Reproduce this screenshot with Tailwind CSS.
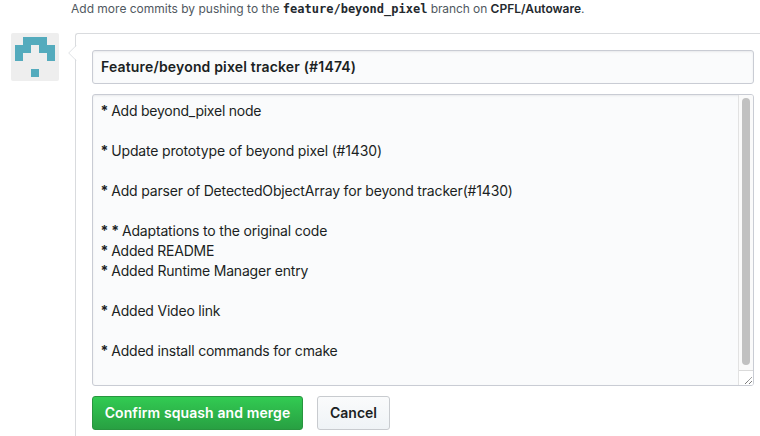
<!DOCTYPE html>
<html lang="en">
<head>
<meta charset="utf-8">
<title>Squash and merge</title>
<script src="https://cdn.jsdelivr.net/npm/@tailwindcss/browser@4"></script>
</head>
<body class="w-[760px] h-[436px] overflow-hidden bg-white font-[Inter,'Liberation_Sans',sans-serif] text-[#1b1f23]">
<p class="h-[33px] pl-[71px] text-[12px] leading-[18px] text-[#505860] whitespace-pre"><span>Add more commits by pushing to the </span><code class="font-['DejaVu_Sans_Mono',monospace] font-bold text-[12px] text-[#24292e]">feature/beyond_pixel</code><span class="tracking-[-0.08px]"> branch on </span><span class="font-semibold text-[#24292e]">CPFL/Autoware</span>.</p>
<main class="flex h-[403px] pl-[11px]">
  <svg class="size-12 shrink-0" viewBox="0 0 48 48" aria-label="avatar"><rect width="48" height="48" rx="2" fill="#eeeeee"/><path d="M12 4h24v8h8v16h-8v-8h-8v-8h-8v8h-8v8H4V12h8zM20 36h8v8h-8z" fill="#54abbd"/></svg>
  <section class="relative ml-4 w-[700px] shrink-0 rounded-tl-[3px] border-t border-l border-[#d9dbde] pt-4 pl-4">
    <svg class="absolute -left-2 top-[11px] w-[9px] h-4" viewBox="0 0 9 16"><path d="M9 0.5L1 8l8 7.5z" fill="#fff"/><path d="M8.2 0.5L0.7 8l7.5 7.5" fill="none" stroke="#dfe2e5"/></svg>
    <div class="flex h-[34px] w-[662px] items-center rounded-[3px] border border-[#c9ccd4] bg-[#fafbfc] pb-px pl-2 text-[14px] font-semibold tracking-[0.17px] shadow-[inset_0_1px_2px_rgba(27,31,35,0.075)]">Feature/beyond pixel tracker (#1474)</div>
    <div class="mt-[10px] flex h-[292px] w-[662px] overflow-hidden rounded-[3px] border border-[#c9ccd4] bg-[#fafbfc] shadow-[inset_0_1px_2px_rgba(27,31,35,0.075)]">
      <div class="grow whitespace-pre pt-[6px] pl-[7.5px] text-[14px] leading-5 tracking-[-0.2px]"><div class="tracking-[-0.24px]"><b class="tracking-[-0.9px]">*</b> Add beyond_pixel node</div><div class="mt-5 tracking-[-0.16px]"><b class="tracking-[-0.9px]">*</b> Update prototype of beyond pixel (#1430)</div><div class="mt-5 tracking-[-0.17px]"><b class="tracking-[-0.9px]">*</b> Add parser of DetectedObjectArray for beyond tracker(#1430)</div><div class="mt-5 tracking-[-0.17px]"><b class="tracking-[-0.9px]">*</b> <b class="tracking-[-0.9px]">*</b> Adaptations to the original code</div><div class="tracking-[-0.22px]"><b class="tracking-[-0.9px]">*</b> Added README</div><div class="tracking-[-0.2px]"><b class="tracking-[-0.9px]">*</b> Added Runtime Manager entry</div><div class="mt-5"><b class="tracking-[-0.9px]">*</b> Added Video link</div><div class="mt-5"><b class="tracking-[-0.9px]">*</b> Added install commands for cmake</div></div>
      <div class="flex w-[15px] flex-col border-l border-[#e2e2e2] bg-[#fafafa]">
        <div class="mt-[3px] ml-[3px] h-[267px] w-2 rounded-full bg-[#c1c1c1]"></div>
        <div class="mt-[5px] h-[15px] border-t border-[#dadada] bg-white"><svg class="size-[14px]" viewBox="0 0 14 14"><path d="M6 13l7-7M10 13l3-3" stroke="#555" stroke-dasharray="1.1 .5" fill="none"/></svg></div>
      </div>
    </div>
    <div class="mt-[10px] flex gap-[14px] text-[14px] font-semibold">
      <button class="h-[34px] w-[211px] rounded-[3px] border border-[#28953f] bg-linear-to-b from-[#32cb52] to-[#28a042] pb-0.5 tracking-[0.1px] text-white whitespace-nowrap">Confirm squash and merge</button>
      <button class="h-[34px] w-[73px] rounded-[3px] border border-[#c8cbcf] bg-linear-to-b from-[#fafbfc] to-[#eff3f6] pb-0.5">Cancel</button>
    </div>
  </section>
</main>
</body>
</html>
